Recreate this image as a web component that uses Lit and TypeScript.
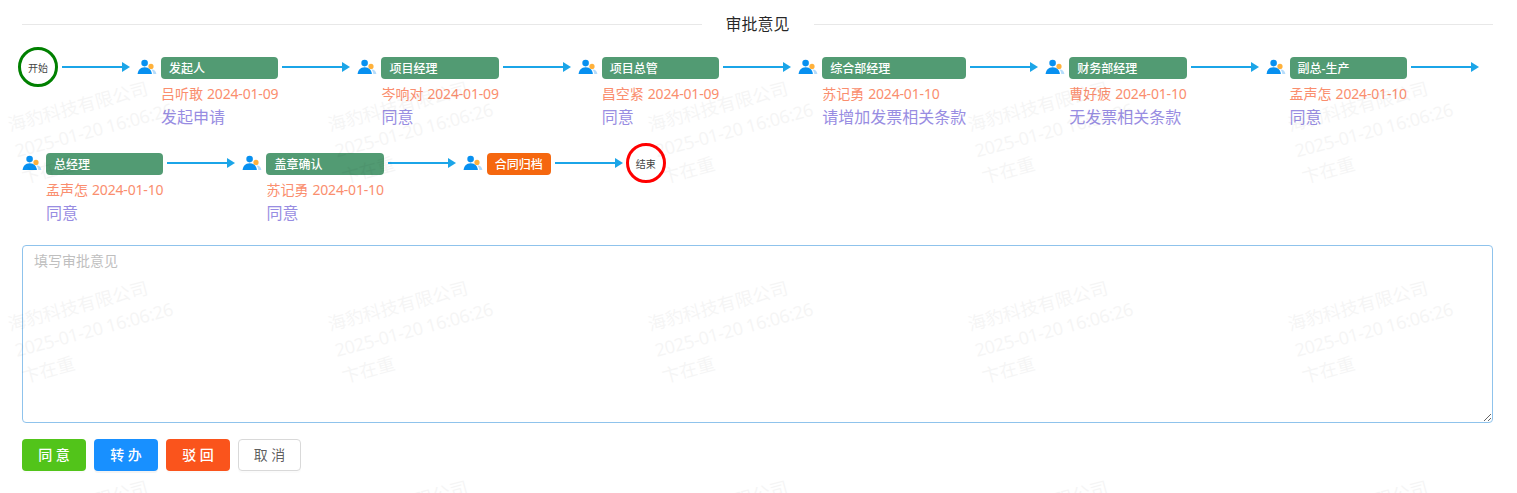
import { LitElement, html, css, svg, nothing } from "lit";
import { customElement, property } from "lit/decorators.js";

const FONT = css`"Noto Sans", "Noto Sans CJK SC", sans-serif`;

interface Step {
  label: string;
  who?: string;
  date?: string;
  note?: string;
  active?: boolean;
}

const ROWS: Step[][] = [
  [
    { label: "发起人", who: "吕听敢", date: "2024-01-09", note: "发起申请" },
    { label: "项目经理", who: "岑响对", date: "2024-01-09", note: "同意" },
    { label: "项目总管", who: "昌空紧", date: "2024-01-09", note: "同意" },
    { label: "综合部经理", who: "苏记勇", date: "2024-01-10", note: "请增加发票相关条款" },
    { label: "财务部经理", who: "曹好疲", date: "2024-01-10", note: "无发票相关条款" },
    { label: "副总-生产", who: "孟声怎", date: "2024-01-10", note: "同意" },
  ],
  [
    { label: "总经理", who: "孟声怎", date: "2024-01-10", note: "同意" },
    { label: "盖章确认", who: "苏记勇", date: "2024-01-10", note: "同意" },
    { label: "合同归档", active: true },
  ],
];

@customElement("flow-arrow")
export class FlowArrow extends LitElement {
  static styles = css`
    :host { display: block; flex: none; width: 68px; height: 10px; margin: 5px 7px 0 4px; }
    svg { display: block; }
  `;
  render() {
    return html`<svg width="68" height="10" viewBox="0 0 68 10">
      <rect x="0" y="4" width="61" height="2" fill="#1ba5e8" />
      <path d="M60 0L68 5L60 10Z" fill="#1ba5e8" />
    </svg>`;
  }
}

@customElement("flow-step")
export class FlowStep extends LitElement {
  @property({ attribute: false }) step!: Step;
  static styles = css`
    :host { display: flex; flex: none; align-items: flex-start; }
    .icon { display: block; flex: none; width: 20px; height: 20px; margin-right: 4px; }
    .body { display: flex; flex-direction: column; white-space: nowrap; }
    .label {
      height: 22px; line-height: 22px; padding: 1px 8px 0; box-sizing: border-box;
      border-radius: 4px; background: #529b73; color: #fff;
      font-size: 12px; font-weight: 500;
    }
    .label.active { background: #f5670f; }
    .sign { height: 23px; line-height: 22px; margin-top: 4px; font-size: 14px; color: #fa8e6e; display: flex; gap: 4px; }
    .date { letter-spacing: -0.17px; }
    .note { height: 24px; line-height: 23px; font-size: 16px; color: #988de2; }
  `;
  render() {
    const s = this.step;
    return html`
      <svg class="icon" viewBox="0 0 20 20">
        <circle cx="7.6" cy="6.1" r="3.3" fill="#0790f0" />
        <path d="M0.6 17.1C0.9 13.2 3.2 10.2 7.7 10.2S14.6 13.2 14.9 17.1Z" fill="#0790f0" />
        <circle cx="14" cy="9.4" r="2.6" fill="#ffb13b" />
        <path d="M14 12.6C17 12.2 19.1 14 19.4 17.1H16.3C16.3 15.2 15.5 13.6 14 12.6Z" fill="#b5dcfb" />
      </svg>
      <div class="body">
        <div class="label ${s.active ? "active" : ""}">${s.label}</div>
        ${s.who
          ? html`<div class="sign"><span>${s.who}</span><span class="date">${s.date}</span></div>
              <div class="note">${s.note}</div>`
          : nothing}
      </div>
      <flow-arrow></flow-arrow>
    `;
  }
}

@customElement("app-root")
export class AppRoot extends LitElement {
  static styles = css`
    :host {
      display: block; position: relative; box-sizing: border-box; height: 493px;
      padding: 12px 24px 0 22px; overflow: hidden; background: #fff;
      font-family: ${FONT}; color: rgba(0, 0, 0, 0.65);
    }
    .divider { display: flex; align-items: center; gap: 24px; height: 24px; font-size: 16px; color: rgba(0, 0, 0, 0.85); }
    .divider::before, .divider::after { content: ""; flex: 1; height: 1px; background: #e8e8e8; }
    .title { line-height: 24px; }
    .flow { display: flex; flex-direction: column; padding-top: 21px; }
    .row { display: flex; align-items: flex-start; height: 96px; }
    .end {
      flex: none; box-sizing: border-box; width: 40px; height: 40px; margin: -10px 0 0 -4px;
      border: 3px solid #008000; border-radius: 50%;
      display: flex; align-items: center; justify-content: center;
      font-size: 10px; padding-top: 1px; color: #444;
    }
    .end.stop { border-color: #ff0000; }
    .opinion {
      display: block; box-sizing: border-box; width: 100%; height: 178px; margin: -4px 0 16px;
      padding: 4px 11px; border: 1px solid #8fc3ec; border-radius: 4px; outline: none;
      font: 14px/22px ${FONT}; color: rgba(0, 0, 0, 0.65); background: #fff; resize: vertical;
    }
    .opinion::placeholder { color: #bfbfbf; opacity: 1; }
    .actions { display: flex; gap: 8px; }
    .btn {
      box-sizing: border-box; width: 64px; height: 32px; padding: 0; border: 1px solid transparent;
      border-radius: 4px; font: 500 14px/30px ${FONT}; color: #fff; text-align: center;
      box-shadow: 0 2px 0 rgba(0, 0, 0, 0.015);
    }
    .ok { background: #52c41a; }
    .forward { background: #1890ff; box-shadow: 0 2px 0 rgba(0, 0, 0, 0.045); }
    .reject { background: #fa541c; }
    .cancel { width: 63px; background: #fff; border-color: #d9d9d9; color: rgba(0, 0, 0, 0.65); font-weight: 400; }
    .watermark { position: absolute; left: 0; top: 0; pointer-events: none; font-size: 18px; fill: #000; opacity: 0.036; }
  `;

  private marks() {
    const out = [];
    for (let r = 0; r < 3; r++)
      for (let c = 0; c < 5; c++)
        out.push(svg`<g transform="translate(${c * 320 + 10} ${r * 199.5 + 131.5}) rotate(-15)">
          <text x="0" y="0">海豹科技有限公司</text>
          ${r < 2
            ? svg`<text x="0" y="27" textLength="163">2025-01-20 16:06:26</text>
              <text x="0" y="54">卞在重</text>`
            : nothing}
        </g>`);
    return out;
  }

  render() {
    return html`
      <div class="divider"><span class="title">审批意见</span></div>
      <div class="flow">
        <div class="row">
          <div class="end">开始</div>
          <flow-arrow></flow-arrow>
          ${ROWS[0].map((s) => html`<flow-step .step=${s}></flow-step>`)}
        </div>
        <div class="row">
          ${ROWS[1].map((s) => html`<flow-step .step=${s}></flow-step>`)}
          <div class="end stop">结束</div>
        </div>
      </div>
      <textarea class="opinion" placeholder="填写审批意见"></textarea>
      <div class="actions">
        <button class="btn ok">同 意</button>
        <button class="btn forward">转 办</button>
        <button class="btn reject">驳 回</button>
        <button class="btn cancel">取 消</button>
      </div>
      <svg class="watermark" width="1517" height="493">${this.marks()}</svg>
    `;
  }
}
